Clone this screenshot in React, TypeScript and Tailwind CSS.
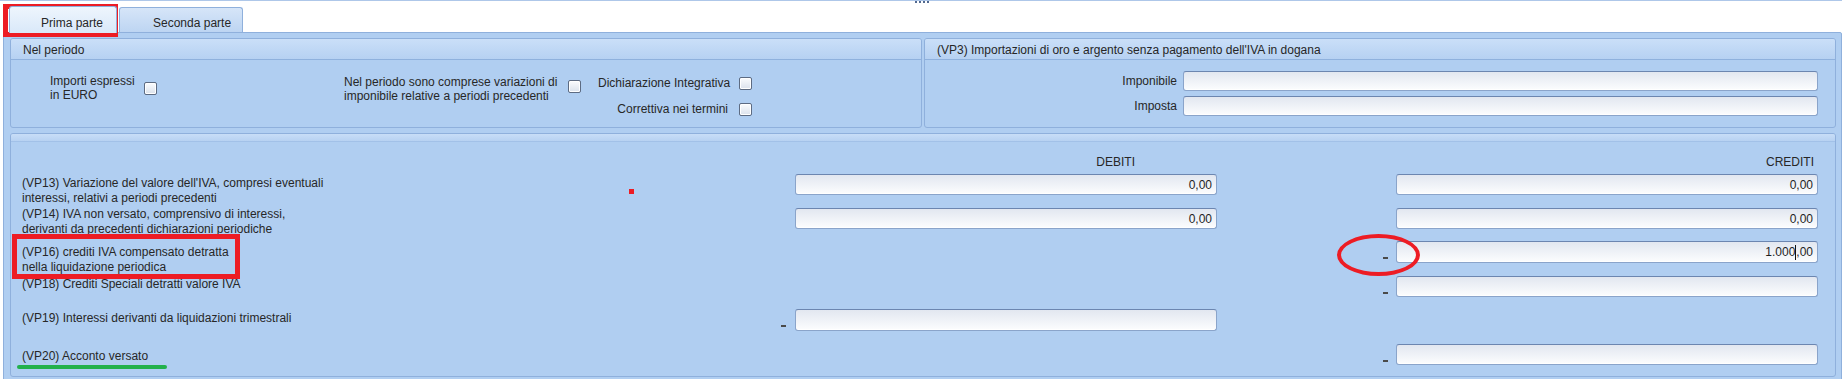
import React from "react";

function Checkbox() {
  return (
    <div className="w-[13px] h-[13px] shrink-0 rounded-[2px] border border-[#5d6b82] bg-linear-to-b from-[#fbfcfe] to-[#dbe2ec] shadow-[inset_0_0_0_1px_#ffffff]" />
  );
}

function Field({ h = "h-[21px]", children }: { h?: string; children?: React.ReactNode }) {
  return (
    <div
      className={`${h} w-full rounded-[3px] border border-[#8aa4ca] border-t-[#6c86b0] bg-linear-to-b from-[#e2e7f0] to-[#fcfdfe] flex items-center justify-end pr-[4px] text-[#1f1f1f] shadow-[inset_0_-1px_0_#ffffff]`}
    >
      {children}
    </div>
  );
}

function Dash() {
  return (
    <div className="pt-[16px]">
      <div className="w-[5px] h-[2px] bg-[#4a4a4a]" />
    </div>
  );
}

function PanelHeader({ children }: { children?: React.ReactNode }) {
  return (
    <div className="h-[21px] border-b border-[#8fb1dd] bg-linear-to-b from-[#cadff8] to-[#b6d1f2] pl-[12px] pt-[4px] leading-[15px] text-[#262626] whitespace-nowrap">
      {children}
    </div>
  );
}

export default function App() {
  return (
    <div className="relative w-[1842px] h-[379px] overflow-hidden bg-white font-['Liberation_Sans',Arial,sans-serif] text-[12px] leading-[14px] text-[#272727]">
      {/* tab strip */}
      <div className="h-[32px] border-t border-[#aec7e9] flex items-end pl-[9px] gap-[2px]">
        <div className="relative z-10 -mb-[1px] h-[27px] w-[108px] pl-[31px] pt-[9px] rounded-t-[3px] border border-b-0 border-[#8fb0dc] bg-linear-to-b from-[#eef5fd] to-[#d9e8f9] whitespace-nowrap">
          Prima parte
        </div>
        <div className="h-[25px] w-[124px] pl-[33px] pt-[8px] rounded-t-[3px] border border-b-0 border-[#8fb0dc] bg-linear-to-b from-[#d6e5f8] to-[#bdd5f2] whitespace-nowrap">
          Seconda parte
        </div>
      </div>

      {/* outer content */}
      <div className="ml-[3px] w-[1839px] h-[360px] border border-[#8fb0dc] rounded-[2px] bg-[#b0cef1] pt-[5px] pl-[6px] pr-[5px]">
        {/* upper panels */}
        <div className="grid grid-cols-2 gap-x-[2px] h-[90px]">
          {/* Nel periodo */}
          <div className="rounded-[3px] border border-[#8fb0dc] bg-[#b0cef1] overflow-hidden">
            <PanelHeader>Nel periodo</PanelHeader>
            <div className="flex items-start">
              {/* group 1 */}
              <div className="w-[333px] pl-[39px] flex items-start shrink-0">
                <div className="mt-[14px] w-[85px] whitespace-nowrap">
                  <div>Importi espressi</div>
                  <div>in EURO</div>
                </div>
                <div className="mt-[22px] ml-[9px]">
                  <Checkbox />
                </div>
              </div>
              {/* group 2 */}
              <div className="w-[254px] flex items-start shrink-0">
                <div className="mt-[15px] w-[224px] whitespace-nowrap">
                  <div>Nel periodo sono comprese variazioni di</div>
                  <div>imponibile relative a periodi precedenti</div>
                </div>
                <div className="mt-[20px]">
                  <Checkbox />
                </div>
              </div>
              {/* group 3 */}
              <div className="flex flex-col pt-[16px] gap-[12px]">
                <div className="flex items-center">
                  <div className="w-[130px] text-right whitespace-nowrap">Dichiarazione Integrativa</div>
                  <div className="ml-[11px]">
                    <Checkbox />
                  </div>
                </div>
                <div className="flex items-center">
                  <div className="w-[130px] text-right whitespace-nowrap">Correttiva nei termini</div>
                  <div className="ml-[11px]">
                    <Checkbox />
                  </div>
                </div>
              </div>
            </div>
          </div>

          {/* VP3 */}
          <div className="rounded-[3px] border border-[#8fb0dc] bg-[#b0cef1] overflow-hidden">
            <PanelHeader>(VP3) Importazioni di oro e argento senza pagamento dell'IVA in dogana</PanelHeader>
            <div className="pt-[11px] flex flex-col gap-[5px]">
              <div className="flex items-center">
                <div className="w-[252px] text-right">Imponibile</div>
                <div className="ml-[6px] w-[635px]">
                  <Field h="h-[20px]" />
                </div>
              </div>
              <div className="flex items-center">
                <div className="w-[252px] text-right">Imposta</div>
                <div className="ml-[6px] w-[635px]">
                  <Field h="h-[20px]" />
                </div>
              </div>
            </div>
          </div>
        </div>

        {/* main panel */}
        <div className="mt-[5px] rounded-[3px] border border-[#8fb0dc] bg-[#b0cef1] overflow-hidden">
          <div className="h-[8px] border-b border-[#a2c1e8] bg-linear-to-b from-[#c8ddf7] to-[#b7d2f2]" />
          <div className="pl-[11px] pt-[13px]">
            {/* column header */}
            <div className="flex h-[14px]">
              <div className="w-[759px]" />
              <div className="w-[14px]" />
              <div className="w-[422px] text-right pr-[82px]">DEBITI</div>
              <div className="w-[166px]" />
              <div className="w-[13px]" />
              <div className="w-[422px] text-right pr-[4px]">CREDITI</div>
            </div>

            <div className="mt-[5px]">
              {/* VP13 */}
              <div className="flex h-[34px]">
                <div className="w-[759px] pt-[2px] leading-[15px] whitespace-nowrap">
                  <div>(VP13) Variazione del valore dell'IVA, compresi eventuali</div>
                  <div>interessi, relativi a periodi precedenti</div>
                </div>
                <div className="w-[14px]" />
                <div className="w-[422px]">
                  <Field>0,00</Field>
                </div>
                <div className="w-[166px]" />
                <div className="w-[13px]" />
                <div className="w-[422px]">
                  <Field>0,00</Field>
                </div>
              </div>

              {/* VP14 */}
              <div className="flex h-[33px]">
                <div className="w-[759px] -mt-[1px] h-[27px] overflow-hidden leading-[15px] whitespace-nowrap">
                  <div>(VP14) IVA non versato, comprensivo di interessi,</div>
                  <div>derivanti da precedenti dichiarazioni periodiche</div>
                </div>
                <div className="w-[14px]" />
                <div className="w-[422px]">
                  <Field>0,00</Field>
                </div>
                <div className="w-[166px]" />
                <div className="w-[13px]" />
                <div className="w-[422px]">
                  <Field>0,00</Field>
                </div>
              </div>

              {/* VP16 */}
              <div className="flex h-[35px]">
                <div className="w-[759px] pt-[4px] leading-[15px] whitespace-nowrap">
                  <div>(VP16) crediti IVA compensato detratta</div>
                  <div>nella liquidazione periodica</div>
                </div>
                <div className="w-[14px]" />
                <div className="w-[422px]" />
                <div className="w-[166px]" />
                <div className="w-[13px]">
                  <Dash />
                </div>
                <div className="w-[422px]">
                  <Field h="h-[22px]">
                    <span>1.000</span>
                    <span className="inline-block w-[1px] h-[15px] bg-[#111]" />
                    <span>,00</span>
                  </Field>
                </div>
              </div>

              {/* VP18 */}
              <div className="flex h-[33px]">
                <div className="w-[759px] pt-[1px] leading-[15px] whitespace-nowrap">
                  <div>(VP18) Crediti Speciali detratti valore IVA</div>
                </div>
                <div className="w-[14px]" />
                <div className="w-[422px]" />
                <div className="w-[166px]" />
                <div className="w-[13px]">
                  <Dash />
                </div>
                <div className="w-[422px]">
                  <Field />
                </div>
              </div>

              {/* VP19 */}
              <div className="flex h-[35px]">
                <div className="w-[759px] pt-[2px] leading-[15px] whitespace-nowrap">
                  <div>(VP19) Interessi derivanti da liquidazioni trimestrali</div>
                </div>
                <div className="w-[14px]">
                  <Dash />
                </div>
                <div className="w-[422px]">
                  <Field h="h-[22px]" />
                </div>
                <div className="w-[166px]" />
                <div className="w-[13px]" />
                <div className="w-[422px]" />
              </div>

              {/* VP20 */}
              <div className="flex h-[32px]">
                <div className="w-[759px] pt-[5px] leading-[15px] whitespace-nowrap">
                  <div>(VP20) Acconto versato</div>
                </div>
                <div className="w-[14px]" />
                <div className="w-[422px]" />
                <div className="w-[166px]" />
                <div className="w-[13px]">
                  <Dash />
                </div>
                <div className="w-[422px]">
                  <Field />
                </div>
              </div>
            </div>
          </div>
        </div>
      </div>

      {/* overlays: grip dots */}
      <div className="absolute left-[915px] top-[1px] flex gap-[2px]">
        <span className="w-[2px] h-[2px] bg-[#52698f]" />
        <span className="w-[2px] h-[2px] bg-[#52698f]" />
        <span className="w-[2px] h-[2px] bg-[#52698f]" />
        <span className="w-[2px] h-[2px] bg-[#52698f]" />
      </div>

      {/* annotations */}
      <div className="absolute left-[3px] top-[4px] w-[115px] h-[33px] border-[5px] border-[#ed1c24] pointer-events-none" />
      <div className="absolute left-[12px] top-[234px] w-[228px] h-[45px] border-[5px] border-[#ed1c24] pointer-events-none" />
      <div className="absolute left-[1337px] top-[234px] w-[83px] h-[42px] rounded-[50%] border-[4px] border-[#ed1c24] pointer-events-none" />
      <div className="absolute left-[629px] top-[189px] w-[5px] h-[5px] bg-[#ed1c24]" />
      <div className="absolute left-[17px] top-[365px] w-[150px] h-[4px] rounded-full bg-[#22b14c]" />
    </div>
  );
}
